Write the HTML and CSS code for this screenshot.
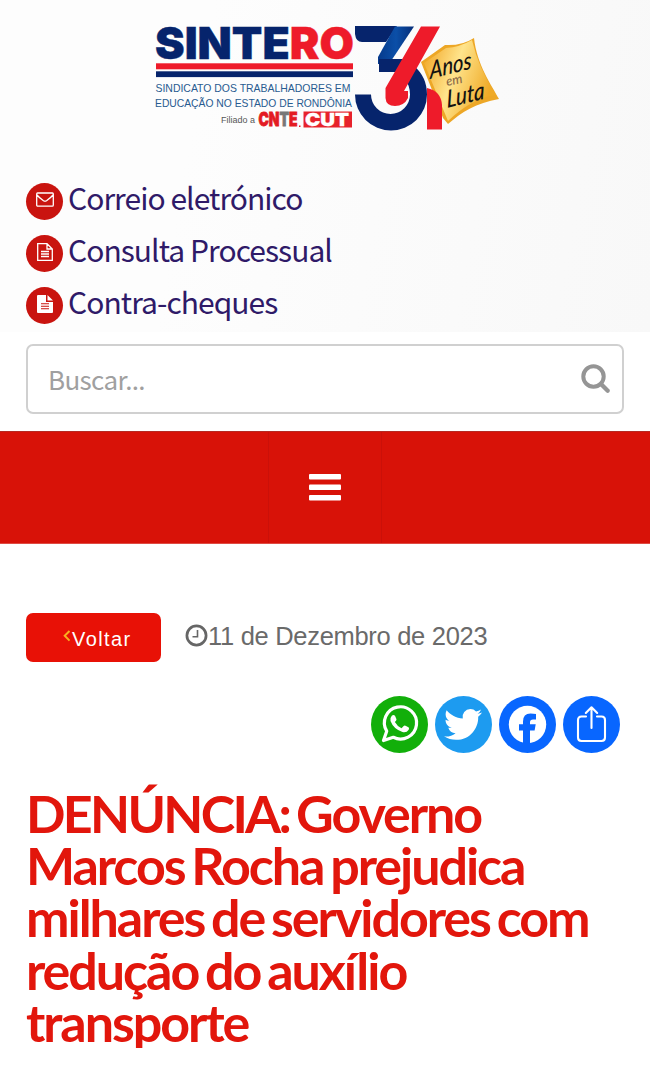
FILE: index.html
```html
<!DOCTYPE html>
<html lang="pt-BR">
<head>
<meta charset="utf-8">
<title>SINTERO</title>
<link rel="stylesheet" href="styles.css">
</head>
<body>
<header class="top">
  <svg class="logo" viewBox="150 20 350 115" role="img" aria-label="SINTERO 34 anos em luta">
    <defs>
      <linearGradient id="gold" x1="0" y1="0" x2="1" y2="0.4">
        <stop offset="0" stop-color="#f0a01c"/><stop offset=".5" stop-color="#ffe48c"/><stop offset="1" stop-color="#efaa27"/>
      </linearGradient>
      <linearGradient id="fold" x1="0" y1="0" x2="1" y2="0"><stop offset="0" stop-color="#053a8c"/><stop offset=".5" stop-color="#0b4fa8"/><stop offset="1" stop-color="#062d78"/></linearGradient>
    </defs>
    <text class="brand" x="155" y="58.500" textLength="199" lengthAdjust="spacingAndGlyphs">SINTE<tspan class="brand-red">RO</tspan></text>
    <rect x="156" y="63.300" width="197" height="6" fill="#ee1b2a"/>
    <rect x="156" y="71.300" width="197" height="5.800" fill="#06246c"/>
    <text class="tagline" x="155.500" y="92.400" textLength="195" lengthAdjust="spacingAndGlyphs">SINDICATO DOS TRABALHADORES EM</text>
    <text class="tagline" x="155" y="106.600" textLength="197" lengthAdjust="spacingAndGlyphs">EDUCAÇÃO NO ESTADO DE RONDÔNIA</text>
    <text class="member" x="221" y="122.500" textLength="34" lengthAdjust="spacingAndGlyphs">Filiado a</text>
    <text class="union" x="258.500" y="126" textLength="39" lengthAdjust="spacingAndGlyphs">CN<tspan class="union-grey">T</tspan>E</text>
    <rect x="299" y="125.500" width="1.500" height="1.500" fill="#e31b23"/>
    <path d="M303.500 111.500H352V127.500H303.500Z" fill="#e7222b"/>
    <text class="union cut" x="305" y="126" textLength="44" lengthAdjust="spacingAndGlyphs">CUT</text>

    <path d="M421 62L445 45Q462 46 474 38C477 65 491 84 499 99C476 103 462 112 448 124L443 118Z" fill="#eda726"/>
    <path d="M424 63L446 48Q460 47 472 40Q478 67 496 95Q472 98 448 121Z" fill="url(#gold)"/>
    <path d="M355 26H397L386 42H362Q356 42 355 34Z" fill="#06246c"/>
    <path d="M395 26.500H414L389 64H378V57Z" fill="url(#fold)"/>
    <path d="M379 59V72H398L410 59Z" fill="#06246c"/>
    <path d="M355 94.500H371A19.500 19.500 0 0 0 410 94.500Q410 85 404 78L414 66Q427 77 427 94.500A36 36 0 0 1 355 94.500Z" fill="#06246c"/>
    <path d="M421 26.500H440L404 91H408V98Q404 106 395 106Q386 106 385.500 98V88Z" fill="#ee1b2a"/>
    <path d="M427 88Q441 91 442 105V129.500H427Z" fill="#ee1b2a"/>
    <text class="script" transform="translate(430 79) rotate(-14) skewX(-12)" textLength="43" lengthAdjust="spacingAndGlyphs">Anos</text>
    <text class="script small" transform="translate(447 86) rotate(-12)">em</text>
    <text class="script" transform="translate(447 108) rotate(-14) skewX(-12)" textLength="39" lengthAdjust="spacingAndGlyphs">Luta</text>
  </svg>
  <ul class="links">
    <li><span class="dot"><svg width="18" height="16" viewBox="0 0 18 16"><path class="line" d="M1.500 1H16.500Q17.300 1 17.300 2V13Q17.300 14.200 16.200 14.200H1.800Q.7 14.200.7 13V2Q.7 1 1.500 1ZM1 3Q3 5.500 7.500 8.700Q9 9.600 10.500 8.700Q15 5.500 17 3"/></svg></span><a>Correio eletrónico</a></li>
    <li><span class="dot"><svg width="16" height="18" viewBox="0 0 16 18"><path class="line" d="M.7.7H10L15.300 6V17.300H.7ZM10 1V6H15M4 8.500H12M4 11H12M4 13.500H12"/></svg></span><a>Consulta Processual</a></li>
    <li><span class="dot"><svg width="16" height="18" viewBox="0 0 16 18"><path fill="#fff" d="M1 0H9V7H16V17Q16 18 15 18H1Q0 18 0 17V1Q0 0 1 0ZM10.500 0L16 5.500H10.500Z"/><path stroke="#c9140f" stroke-width="1.100" d="M4 8.700H12M4 11.200H12M4 13.700H12"/></svg></span><a>Contra-cheques</a></li>
  </ul>
</header>
<div class="search">
  <span>Buscar...</span>
  <svg width="30" height="30" viewBox="0 0 30 30" fill="none" stroke="#959595"><circle cx="12.500" cy="12.500" r="10.200" stroke-width="4"/><path d="M20 20L26.700 26.700" stroke-width="4.300" stroke-linecap="round"/></svg>
</div>
<nav class="bar"><div class="toggle">
  <svg width="32" height="27" viewBox="0 0 32 27" fill="#fff"><rect width="32" height="5.600" rx="1"/><rect y="10.500" width="32" height="5.600" rx="1"/><rect y="21" width="32" height="5.600" rx="1"/></svg>
</div></nav>
<main>
  <div class="meta">
    <a class="back"><svg width="8" height="12" viewBox="0 0 8 12"><path d="M6.500 1L1.700 5.800L6.500 10.600" fill="none" stroke="#f8b01f" stroke-width="2"/></svg>Voltar</a>
    <svg class="clock" width="23" height="23" viewBox="0 0 23 23" fill="none" stroke="#666"><circle cx="11.500" cy="11.500" r="9.600" stroke-width="2.700"/><path d="M12.500 6V12.700H7.500" stroke-width="1.600"/></svg>
    <time>11 de Dezembro de 2023</time>
  </div>
  <div class="share">
    <svg viewBox="0 0 57 57"><circle cx="28.500" cy="28.500" r="28.500" fill="#12af0a"/><path d="M12.500 44.500L15.700 35.200A16.100 16.100 0 1 1 22.300 41.300Z" fill="none" stroke="#fff" stroke-width="3.200" stroke-linejoin="round"/><path fill="#fff" d="M20.800 19.800Q22.500 18.300 24 19.800L25.500 23.300Q25.700 24.300 23.900 26Q26 30 30.500 32.200L32.700 29.900Q33.400 29.200 34.500 29.700L37.500 31.200Q38.500 31.800 37.700 33.700Q35.500 37 31.500 36Q22.500 33 19.500 25Q18.800 22 20.800 19.800Z"/></svg>
    <svg viewBox="0 0 32 32"><circle cx="16" cy="16" r="16" fill="#1d9bf0"/><path transform="translate(1.500 1.700) scale(.89)" fill="#fff" d="M28 8.557a10 10 0 0 1-2.828.775 4.930 4.930 0 0 0 2.166-2.725 9.700 9.700 0 0 1-3.130 1.194 4.920 4.920 0 0 0-3.593-1.550 4.924 4.924 0 0 0-4.794 6.049c-4.090-.21-7.720-2.170-10.150-5.150a4.940 4.940 0 0 0-.665 2.477c0 1.710.87 3.214 2.190 4.100a5 5 0 0 1-2.230-.616v.06c0 2.390 1.700 4.380 3.952 4.830-.414.115-.85.174-1.297.174q-.476-.001-.928-.086a4.935 4.935 0 0 0 4.600 3.420 9.900 9.900 0 0 1-6.114 2.107q-.597 0-1.175-.068a13.950 13.950 0 0 0 7.550 2.213c9.056 0 14.010-7.507 14.010-14.013q0-.32-.015-.637c.96-.695 1.795-1.560 2.455-2.550z"/></svg>
    <svg viewBox="0 0 57 57"><circle cx="28.500" cy="28.500" r="28.500" fill="#0866ff"/><circle cx="28.500" cy="28.500" r="18.700" fill="#fff"/><path fill="#0866ff" d="M24 48V34.500H20V28.200H24V25.500Q24 17.400 31.500 17.400Q34.500 17.400 37 18V23.500H34Q31 23.500 31 26.300V28.200H36.700L35.600 34.500H31V48Z"/></svg>
    <svg viewBox="0 0 57 57"><circle cx="28.500" cy="28.500" r="28.500" fill="#0866ff"/><path fill="none" stroke="#fff" stroke-width="2.100" stroke-linecap="round" stroke-linejoin="round" d="M23 20.500H18.500Q15 20.500 15 24V41.500Q15 45 18.500 45H38.500Q42 45 42 41.500V24Q42 20.500 38.500 20.500H34M28.500 32V11.500M22.800 17L28.500 11.300L34.200 17"/></svg>
  </div>
  <h1><span class="caps">DENÚNCIA:</span> Governo<br>Marcos Rocha prejudica<br>milhares de servidores com<br>redução do auxílio<br>transporte</h1>
</main>
</body>
</html>
```
FILE: styles.css
```css
* { box-sizing: border-box; }
body { margin: 0; background: #fff; font-family: "Liberation Sans", Arial, sans-serif; }
.top {
  height: 332px;
  padding-top: 20px;
  background: linear-gradient(100deg, #fdfdfd 30%, #f8f8f8 100%);
}
.logo { display: block; width: 350px; height: 115px; margin-left: 150px; overflow: visible; }
.brand { font: 900 44px "Inter", "Liberation Sans", sans-serif; fill: #06246c; stroke: #06246c; stroke-width: .4px; }
.brand-red { fill: #ee1b2a; stroke: #ee1b2a; }
.tagline { font: 11.500px "Liberation Sans", sans-serif; fill: #285b90; }
.member { font: 8.500px "Liberation Sans", sans-serif; fill: #555; }
.union { font: 900 18.500px "Inter", "Liberation Sans", sans-serif; fill: #e31b23; stroke: #e31b23; stroke-width: .8px; }
.union-grey { fill: #777; stroke: #777; }
.union.cut { fill: #fff; stroke: #fff; stroke-width: .3px; font-size: 18px; }
.script { font: italic 500 24px "Lato", sans-serif; fill: #141210; }
.script.small { font-size: 13px; fill: #8a6a48; }
.links { list-style: none; margin: 40px 0 0; padding: 0 26px; }
.links li { display: flex; align-items: center; height: 52px; gap: 5px; }
.links a { font: 400 30px/44px "Noto Sans CJK SC", sans-serif; color: #2f1a68; letter-spacing: -.95px; margin-top: -9px; }
.dot { display: flex; align-items: center; justify-content: center; width: 37px; height: 37px; border-radius: 50%; background: #c9140f; padding-bottom: 2px; }
.line { fill: none; stroke: #fff; stroke-width: 1.300px; }
.search {
  display: flex; align-items: center; justify-content: space-between;
  height: 70px; margin: 12px 26px 17px; padding: 0 11px 0 20px;
  border: 2px solid #d0d0d0; border-radius: 7px;
  font: 26px/36px "Noto Sans CJK SC", sans-serif; color: #a0a0a0; letter-spacing: -.65px;
}
.bar { display: flex; justify-content: center; height: 113px; background: #d81208; border-top: 1px solid #b52a22; border-bottom: 1px solid #df4b43; }
.toggle { display: flex; align-items: center; justify-content: center; width: 114px; border: solid #cb1009; border-width: 0 1px; }
main { padding: 69px 26px 0; }
.meta { display: flex; align-items: center; height: 49px; color: #6a6a6a; }
.back { display: flex; align-items: center; width: 135px; height: 49px; padding: 4px 0 0 37px; border-radius: 7px; background: #e81106; color: #fff; font-size: 20px; letter-spacing: 1.400px; }
.back svg { margin: -7px 1px 0 0; }
.clock { margin: -4px 0 0 24px; }
.meta time { font-size: 25.500px; line-height: 30px; margin-top: -4px; letter-spacing: -.3px; }
.share { display: flex; justify-content: flex-end; gap: 7px; margin: 34px 4px 0 0; height: 57px; }
.share svg { width: 57px; height: 57px; }
h1 { margin: 34px 0 0; font: 700 52px/52.200px "Lato", sans-serif; letter-spacing: -2.050px; word-spacing: -3.800px; color: #e2160c; white-space: nowrap; }
.caps { letter-spacing: -2.700px; }
```
